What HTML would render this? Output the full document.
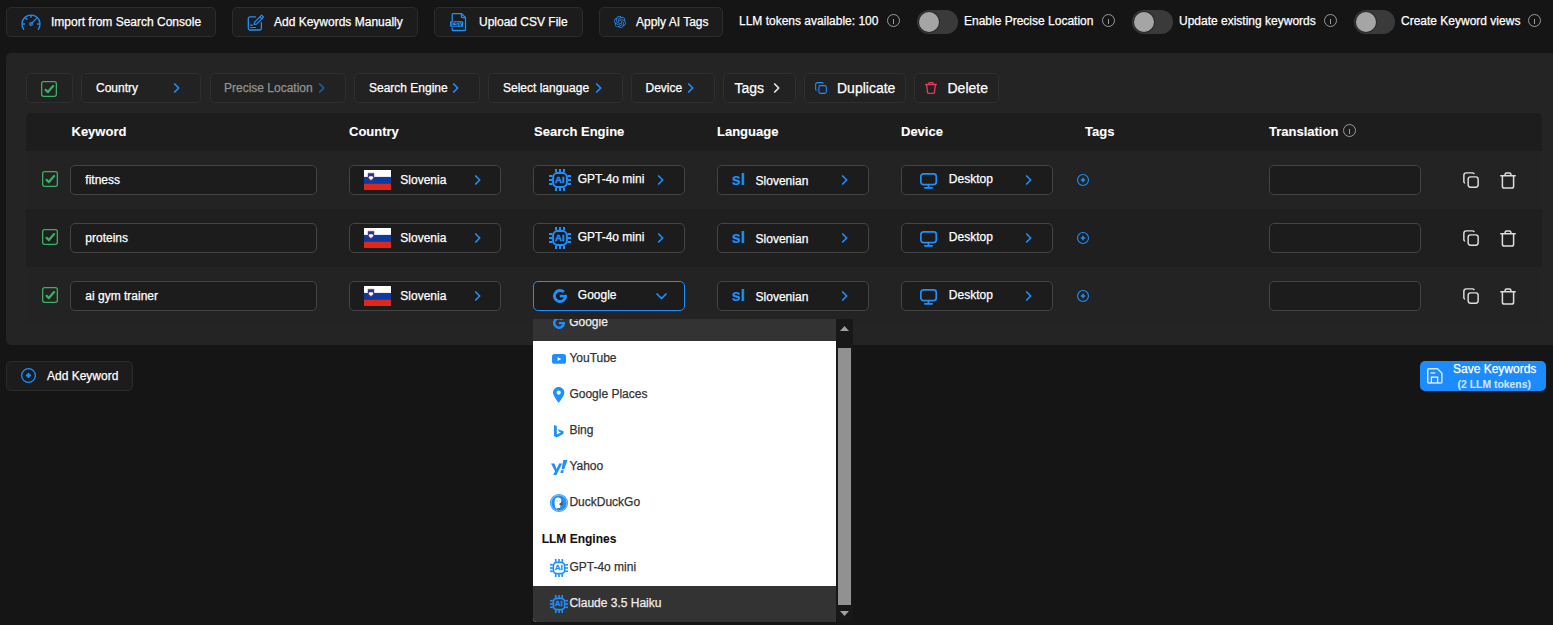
<!DOCTYPE html>
<html><head><meta charset="utf-8">
<style>
*{box-sizing:border-box;margin:0;padding:0}
html,body{width:1553px;height:625px;overflow:hidden;background:#151515;font-family:"Liberation Sans",sans-serif;color:#fff}
.a{position:absolute}
.t{position:absolute;line-height:1;white-space:nowrap}
.f12{font-size:12px}.f13{font-size:13px}.f14{font-size:14px}.f11{font-size:11px}
.b{font-weight:700}
.tb{position:absolute;top:7px;height:30px;border:1px solid #2c2c2c;border-radius:5px;background:#1c1c1c}
.info{position:absolute;width:13px;height:13px;border:1px solid #9a9a9a;border-radius:50%}
.info:after{content:"";position:absolute;left:5px;top:4px;width:1px;height:5px;background:#9a9a9a}
.tog{position:absolute;top:10px;width:41px;height:24px;border-radius:12px;background:#3a3a3a}
.tog:before{content:"";position:absolute;left:1px;top:1px;width:22px;height:22px;border-radius:50%;background:#2a2a2a}
.tog:after{content:"";position:absolute;left:2px;top:2px;width:20px;height:20px;border-radius:50%;background:#a5a5a5}
.panel{position:absolute;left:6px;top:53px;width:1560px;height:292px;background:#242424;border-radius:5px}
.pb{position:absolute;top:73px;height:30px;border:1px solid #2f2f2f;border-radius:5px;background:#222}
.chk{position:absolute;width:16px;height:16px;border:1.5px solid #3ea85a;border-radius:2px}
.inp{position:absolute;height:30px;border:1px solid #444;border-radius:5px;background:#1c1c1c}
.row{position:absolute;left:26px;width:1516px;height:58px}
svg{position:absolute;overflow:visible}
.dd{color:#333}
.t{-webkit-text-stroke:0.25px currentColor}
.t.b{-webkit-text-stroke:0.1px currentColor}

</style></head><body>
<!-- TOP BAR -->
<div class="tb" style="left:6px;width:210px"></div>
<div class="tb" style="left:232px;width:186px"></div>
<div class="tb" style="left:434px;width:149px"></div>
<div class="tb" style="left:599px;width:124px"></div>
<span class="t f12" style="left:51px;top:15.5px">Import from Search Console</span>
<span class="t f12" style="left:274px;top:15.5px">Add Keywords Manually</span>
<span class="t f12" style="left:479px;top:15.5px">Upload CSV File</span>
<span class="t f12" style="left:636px;top:15.5px">Apply AI Tags</span>

<span class="t f12" style="left:739px;top:14.6px">LLM tokens available: 100</span>
<div class="info" style="left:887px;top:14px"></div>
<div class="tog" style="left:917px"></div>
<span class="t f12" style="left:964px;top:14.6px">Enable Precise Location</span>
<div class="info" style="left:1102px;top:14px"></div>
<div class="tog" style="left:1132px"></div>
<span class="t f12" style="left:1179px;top:14.6px">Update existing keywords</span>
<div class="info" style="left:1324px;top:14px"></div>
<div class="tog" style="left:1354px"></div>
<span class="t f12" style="left:1401px;top:14.6px">Create Keyword views</span>
<div class="info" style="left:1528px;top:14px"></div>

<!-- PANEL -->
<div class="panel"></div>
<div class="pb" style="left:26px;width:47px"></div>
<svg style="left:41px;top:81px" width="16" height="16" viewBox="0 0 16 16"><rect x="0.65" y="0.65" width="14.7" height="14.7" rx="2" fill="none" stroke="#3bae63" stroke-width="1.3"/><path d="M4.6 8.9 L6.9 11.1 L12.1 5.1" fill="none" stroke="#3bae63" stroke-width="2.3" stroke-linecap="round" stroke-linejoin="round"/></svg>
<div class="pb" style="left:81px;width:120px"></div>
<span class="t f12" style="left:96px;top:81.5px">Country</span>
<div class="pb" style="left:210px;width:136px"></div>
<span class="t f12" style="left:224px;top:81.5px;color:#939393">Precise Location</span>
<div class="pb" style="left:354px;width:126px"></div>
<span class="t f12" style="left:369px;top:81.5px">Search Engine</span>
<div class="pb" style="left:488px;width:135px"></div>
<span class="t f12" style="left:503px;top:81.5px">Select language</span>
<div class="pb" style="left:631px;width:84px"></div>
<span class="t f12" style="left:645.5px;top:81.5px">Device</span>
<div class="pb" style="left:723px;width:73px"></div>
<span class="t f14" style="left:734.5px;top:80.8px">Tags</span>
<div class="pb" style="left:804px;width:102px"></div>
<span class="t f14" style="left:837px;top:80.8px">Duplicate</span>
<div class="pb" style="left:914px;width:85px"></div>
<span class="t f14" style="left:947.5px;top:80.8px">Delete</span>

<!-- TABLE HEADER -->
<div class="a" style="left:26px;top:113px;width:1516px;height:38px;background:#1d1d1d;border-radius:5px 5px 0 0"></div>
<span class="t f13 b" style="left:71.5px;top:124.9px">Keyword</span>
<span class="t f13 b" style="left:349px;top:124.9px">Country</span>
<span class="t f13 b" style="left:534px;top:124.9px">Search Engine</span>
<span class="t f13 b" style="left:717px;top:124.9px">Language</span>
<span class="t f13 b" style="left:901px;top:124.9px">Device</span>
<span class="t f13 b" style="left:1085px;top:124.9px">Tags</span>
<span class="t f13 b" style="left:1269px;top:124.9px">Translation</span>
<div class="info" style="left:1343px;top:124px"></div>

<!-- ROWS -->
<div class="row" style="top:151px;background:#232323"></div>
<div class="row" style="top:209px;background:#1f1f1f"></div>
<div class="row" style="top:267px;background:#232323"></div>

<svg style="left:42px;top:171px" width="16" height="16" viewBox="0 0 16 16"><rect x="0.65" y="0.65" width="14.7" height="14.7" rx="2" fill="none" stroke="#3bae63" stroke-width="1.3"/><path d="M4.6 8.9 L6.9 11.1 L12.1 5.1" fill="none" stroke="#3bae63" stroke-width="2.3" stroke-linecap="round" stroke-linejoin="round"/></svg><div class="inp" style="left:70px;top:165px;width:247px"></div><span class="t f12" style="left:85.3px;top:173.9px">fitness</span><div class="inp" style="left:349px;top:165px;width:152px"></div><svg style="left:364px;top:170px" width="27" height="20" viewBox="0 0 27 20"><rect width="27" height="7" fill="#fff"/><rect y="6.9" width="27" height="6.7" fill="#0b3ba1"/><rect y="13.6" width="27" height="6.4" fill="#e0281a"/><path d="M4 3.2 h6 v3.8 c0 2 -1.5 3.2 -3 3.8 c-1.5 -0.6 -3 -1.8 -3 -3.8z" fill="#0b3ba1" stroke="#e0281a" stroke-width="0.5"/><path d="M4.6 7.6 l1.4 -1.8 l1 1 l1 -1 l1.4 1.8 c-0.5 1.2 -1.5 2 -2.4 2.4 c-0.9 -0.4 -1.9 -1.2 -2.4 -2.4z" fill="#fff"/></svg><span class="t f12" style="left:400.3px;top:173.9px">Slovenia</span><svg style="left:474.5px;top:175.2px" width="6" height="10" viewBox="0 0 6 10"><path d="M0.7 1 L4.7 5 L0.7 9" fill="none" stroke="#1e8fff" stroke-width="1.7" stroke-linecap="round" stroke-linejoin="round"/></svg><div class="inp" style="left:533px;top:165px;width:152px"></div><svg style="left:549px;top:169px" width="22" height="22" viewBox="0 0 22 22"><rect x="6" y="0" width="2" height="3.5" fill="#1e8fff"/><rect x="6" y="18.5" width="2" height="3.5" fill="#1e8fff"/><rect x="0" y="6" width="3.5" height="2" fill="#1e8fff"/><rect x="18.5" y="6" width="3.5" height="2" fill="#1e8fff"/><rect x="10" y="0" width="2" height="3.5" fill="#1e8fff"/><rect x="10" y="18.5" width="2" height="3.5" fill="#1e8fff"/><rect x="0" y="10" width="3.5" height="2" fill="#1e8fff"/><rect x="18.5" y="10" width="3.5" height="2" fill="#1e8fff"/><rect x="14" y="0" width="2" height="3.5" fill="#1e8fff"/><rect x="14" y="18.5" width="2" height="3.5" fill="#1e8fff"/><rect x="0" y="14" width="3.5" height="2" fill="#1e8fff"/><rect x="18.5" y="14" width="3.5" height="2" fill="#1e8fff"/><rect x="4.1" y="4.1" width="13.8" height="13.8" rx="4.4" fill="#1c1c1c" stroke="#1e8fff" stroke-width="2"/><text x="5.9" y="13.8" textLength="9.8" lengthAdjust="spacingAndGlyphs" font-family="Liberation Sans" font-weight="700" font-size="9" fill="#1e8fff" stroke="#1e8fff" stroke-width="0.35">AI</text></svg><span class="t f12" style="left:577.7px;top:172.7px">GPT-4o mini</span><svg style="left:658.2px;top:175px" width="6" height="10" viewBox="0 0 6 10"><path d="M0.7 1 L4.7 5 L0.7 9" fill="none" stroke="#1e8fff" stroke-width="1.7" stroke-linecap="round" stroke-linejoin="round"/></svg><div class="inp" style="left:717px;top:165px;width:152px"></div><span class="t b" style="font-size:16px;left:731.8px;top:172.4px;color:#1e8fff">sl</span><span class="t f12" style="left:755.6px;top:174.8px">Slovenian</span><svg style="left:842.3px;top:175.2px" width="6" height="10" viewBox="0 0 6 10"><path d="M0.7 1 L4.7 5 L0.7 9" fill="none" stroke="#1e8fff" stroke-width="1.7" stroke-linecap="round" stroke-linejoin="round"/></svg><div class="inp" style="left:901px;top:165px;width:152px"></div><svg style="left:919.8px;top:172.5px" width="18" height="16" viewBox="0 0 18 16"><rect x="0.85" y="0.85" width="15.4" height="10.7" rx="2.6" fill="none" stroke="#1e8fff" stroke-width="1.7"/><path d="M8.5 11.6 V14.6 M4.8 14.8 H12.2" fill="none" stroke="#1e8fff" stroke-width="1.7" stroke-linecap="round"/></svg><span class="t f12" style="left:948.8px;top:173px">Desktop</span><svg style="left:1026.3px;top:175.2px" width="6" height="10" viewBox="0 0 6 10"><path d="M0.7 1 L4.7 5 L0.7 9" fill="none" stroke="#1e8fff" stroke-width="1.7" stroke-linecap="round" stroke-linejoin="round"/></svg><svg style="left:1077px;top:174px" width="12" height="12" viewBox="0 0 12 12"><circle cx="6.0" cy="6.0" r="5.45" fill="none" stroke="#1e8fff" stroke-width="1.1"/><path d="M3.8 6.0 H8.2 M6.0 3.8 V8.2" stroke="#1e8fff" stroke-width="1.5"/></svg><div class="inp" style="left:1269px;top:165px;width:152px"></div><svg style="left:1463px;top:172px" width="16" height="16" viewBox="0 0 16 16"><path d="M11 1.6 C10.7 1.1 10.2 0.85 9.6 0.85 H3.4 C2 0.85 0.85 2 0.85 3.4 V9.6 C0.85 10.2 1.1 10.7 1.6 11" fill="none" stroke="#dedede" stroke-width="1.45" stroke-linecap="round"/><rect x="5.15" y="4.85" width="10" height="10.3" rx="2.4" fill="none" stroke="#dedede" stroke-width="1.45"/></svg><svg style="left:1500px;top:171.5px" width="16" height="17" viewBox="0 0 16 17"><path d="M0.8 3.8 H15.2" stroke="#dedede" stroke-width="1.5" stroke-linecap="round"/><path d="M4.8 3.6 L5.4 1.6 C5.6 1.1 5.9 0.9 6.4 0.9 H9.6 C10.1 0.9 10.4 1.1 10.6 1.6 L11.2 3.6" fill="none" stroke="#dedede" stroke-width="1.5"/><path d="M2.4 4 V14.2 C2.4 15.3 3.1 16.1 4.2 16.1 H11.8 C12.9 16.1 13.6 15.3 13.6 14.2 V4" fill="none" stroke="#dedede" stroke-width="1.5"/></svg><svg style="left:42px;top:229px" width="16" height="16" viewBox="0 0 16 16"><rect x="0.65" y="0.65" width="14.7" height="14.7" rx="2" fill="none" stroke="#3bae63" stroke-width="1.3"/><path d="M4.6 8.9 L6.9 11.1 L12.1 5.1" fill="none" stroke="#3bae63" stroke-width="2.3" stroke-linecap="round" stroke-linejoin="round"/></svg><div class="inp" style="left:70px;top:223px;width:247px"></div><span class="t f12" style="left:85.3px;top:231.9px">proteins</span><div class="inp" style="left:349px;top:223px;width:152px"></div><svg style="left:364px;top:228px" width="27" height="20" viewBox="0 0 27 20"><rect width="27" height="7" fill="#fff"/><rect y="6.9" width="27" height="6.7" fill="#0b3ba1"/><rect y="13.6" width="27" height="6.4" fill="#e0281a"/><path d="M4 3.2 h6 v3.8 c0 2 -1.5 3.2 -3 3.8 c-1.5 -0.6 -3 -1.8 -3 -3.8z" fill="#0b3ba1" stroke="#e0281a" stroke-width="0.5"/><path d="M4.6 7.6 l1.4 -1.8 l1 1 l1 -1 l1.4 1.8 c-0.5 1.2 -1.5 2 -2.4 2.4 c-0.9 -0.4 -1.9 -1.2 -2.4 -2.4z" fill="#fff"/></svg><span class="t f12" style="left:400.3px;top:231.9px">Slovenia</span><svg style="left:474.5px;top:233.2px" width="6" height="10" viewBox="0 0 6 10"><path d="M0.7 1 L4.7 5 L0.7 9" fill="none" stroke="#1e8fff" stroke-width="1.7" stroke-linecap="round" stroke-linejoin="round"/></svg><div class="inp" style="left:533px;top:223px;width:152px"></div><svg style="left:549px;top:227px" width="22" height="22" viewBox="0 0 22 22"><rect x="6" y="0" width="2" height="3.5" fill="#1e8fff"/><rect x="6" y="18.5" width="2" height="3.5" fill="#1e8fff"/><rect x="0" y="6" width="3.5" height="2" fill="#1e8fff"/><rect x="18.5" y="6" width="3.5" height="2" fill="#1e8fff"/><rect x="10" y="0" width="2" height="3.5" fill="#1e8fff"/><rect x="10" y="18.5" width="2" height="3.5" fill="#1e8fff"/><rect x="0" y="10" width="3.5" height="2" fill="#1e8fff"/><rect x="18.5" y="10" width="3.5" height="2" fill="#1e8fff"/><rect x="14" y="0" width="2" height="3.5" fill="#1e8fff"/><rect x="14" y="18.5" width="2" height="3.5" fill="#1e8fff"/><rect x="0" y="14" width="3.5" height="2" fill="#1e8fff"/><rect x="18.5" y="14" width="3.5" height="2" fill="#1e8fff"/><rect x="4.1" y="4.1" width="13.8" height="13.8" rx="4.4" fill="#1c1c1c" stroke="#1e8fff" stroke-width="2"/><text x="5.9" y="13.8" textLength="9.8" lengthAdjust="spacingAndGlyphs" font-family="Liberation Sans" font-weight="700" font-size="9" fill="#1e8fff" stroke="#1e8fff" stroke-width="0.35">AI</text></svg><span class="t f12" style="left:577.7px;top:230.7px">GPT-4o mini</span><svg style="left:658.2px;top:233px" width="6" height="10" viewBox="0 0 6 10"><path d="M0.7 1 L4.7 5 L0.7 9" fill="none" stroke="#1e8fff" stroke-width="1.7" stroke-linecap="round" stroke-linejoin="round"/></svg><div class="inp" style="left:717px;top:223px;width:152px"></div><span class="t b" style="font-size:16px;left:731.8px;top:230.4px;color:#1e8fff">sl</span><span class="t f12" style="left:755.6px;top:232.8px">Slovenian</span><svg style="left:842.3px;top:233.2px" width="6" height="10" viewBox="0 0 6 10"><path d="M0.7 1 L4.7 5 L0.7 9" fill="none" stroke="#1e8fff" stroke-width="1.7" stroke-linecap="round" stroke-linejoin="round"/></svg><div class="inp" style="left:901px;top:223px;width:152px"></div><svg style="left:919.8px;top:230.5px" width="18" height="16" viewBox="0 0 18 16"><rect x="0.85" y="0.85" width="15.4" height="10.7" rx="2.6" fill="none" stroke="#1e8fff" stroke-width="1.7"/><path d="M8.5 11.6 V14.6 M4.8 14.8 H12.2" fill="none" stroke="#1e8fff" stroke-width="1.7" stroke-linecap="round"/></svg><span class="t f12" style="left:948.8px;top:231px">Desktop</span><svg style="left:1026.3px;top:233.2px" width="6" height="10" viewBox="0 0 6 10"><path d="M0.7 1 L4.7 5 L0.7 9" fill="none" stroke="#1e8fff" stroke-width="1.7" stroke-linecap="round" stroke-linejoin="round"/></svg><svg style="left:1077px;top:232px" width="12" height="12" viewBox="0 0 12 12"><circle cx="6.0" cy="6.0" r="5.45" fill="none" stroke="#1e8fff" stroke-width="1.1"/><path d="M3.8 6.0 H8.2 M6.0 3.8 V8.2" stroke="#1e8fff" stroke-width="1.5"/></svg><div class="inp" style="left:1269px;top:223px;width:152px"></div><svg style="left:1463px;top:230px" width="16" height="16" viewBox="0 0 16 16"><path d="M11 1.6 C10.7 1.1 10.2 0.85 9.6 0.85 H3.4 C2 0.85 0.85 2 0.85 3.4 V9.6 C0.85 10.2 1.1 10.7 1.6 11" fill="none" stroke="#dedede" stroke-width="1.45" stroke-linecap="round"/><rect x="5.15" y="4.85" width="10" height="10.3" rx="2.4" fill="none" stroke="#dedede" stroke-width="1.45"/></svg><svg style="left:1500px;top:229.5px" width="16" height="17" viewBox="0 0 16 17"><path d="M0.8 3.8 H15.2" stroke="#dedede" stroke-width="1.5" stroke-linecap="round"/><path d="M4.8 3.6 L5.4 1.6 C5.6 1.1 5.9 0.9 6.4 0.9 H9.6 C10.1 0.9 10.4 1.1 10.6 1.6 L11.2 3.6" fill="none" stroke="#dedede" stroke-width="1.5"/><path d="M2.4 4 V14.2 C2.4 15.3 3.1 16.1 4.2 16.1 H11.8 C12.9 16.1 13.6 15.3 13.6 14.2 V4" fill="none" stroke="#dedede" stroke-width="1.5"/></svg><svg style="left:42px;top:287px" width="16" height="16" viewBox="0 0 16 16"><rect x="0.65" y="0.65" width="14.7" height="14.7" rx="2" fill="none" stroke="#3bae63" stroke-width="1.3"/><path d="M4.6 8.9 L6.9 11.1 L12.1 5.1" fill="none" stroke="#3bae63" stroke-width="2.3" stroke-linecap="round" stroke-linejoin="round"/></svg><div class="inp" style="left:70px;top:281px;width:247px"></div><span class="t f12" style="left:85.3px;top:289.9px">ai gym trainer</span><div class="inp" style="left:349px;top:281px;width:152px"></div><svg style="left:364px;top:286px" width="27" height="20" viewBox="0 0 27 20"><rect width="27" height="7" fill="#fff"/><rect y="6.9" width="27" height="6.7" fill="#0b3ba1"/><rect y="13.6" width="27" height="6.4" fill="#e0281a"/><path d="M4 3.2 h6 v3.8 c0 2 -1.5 3.2 -3 3.8 c-1.5 -0.6 -3 -1.8 -3 -3.8z" fill="#0b3ba1" stroke="#e0281a" stroke-width="0.5"/><path d="M4.6 7.6 l1.4 -1.8 l1 1 l1 -1 l1.4 1.8 c-0.5 1.2 -1.5 2 -2.4 2.4 c-0.9 -0.4 -1.9 -1.2 -2.4 -2.4z" fill="#fff"/></svg><span class="t f12" style="left:400.3px;top:289.9px">Slovenia</span><svg style="left:474.5px;top:291.2px" width="6" height="10" viewBox="0 0 6 10"><path d="M0.7 1 L4.7 5 L0.7 9" fill="none" stroke="#1e8fff" stroke-width="1.7" stroke-linecap="round" stroke-linejoin="round"/></svg><div class="inp" style="left:533px;top:281px;width:152px;border-color:#1e8fff"></div><svg style="left:553px;top:289px" width="14" height="14" viewBox="0 0 14 14"><path d="M12.55 7 A5.55 5.55 0 1 1 10.9 3.05" fill="none" stroke="#1e8fff" stroke-width="2.9"/><path d="M6.8 7.1 H14" stroke="#1e8fff" stroke-width="2.6"/></svg><span class="t f12" style="left:577.8px;top:288.8px">Google</span><svg style="left:655.5px;top:292.5px" width="11" height="7" viewBox="0 0 11 7"><path d="M1 1 L5.5 5.5 L10 1" fill="none" stroke="#1e8fff" stroke-width="1.7" stroke-linecap="round" stroke-linejoin="round"/></svg><div class="inp" style="left:717px;top:281px;width:152px"></div><span class="t b" style="font-size:16px;left:731.8px;top:288.4px;color:#1e8fff">sl</span><span class="t f12" style="left:755.6px;top:290.8px">Slovenian</span><svg style="left:842.3px;top:291.2px" width="6" height="10" viewBox="0 0 6 10"><path d="M0.7 1 L4.7 5 L0.7 9" fill="none" stroke="#1e8fff" stroke-width="1.7" stroke-linecap="round" stroke-linejoin="round"/></svg><div class="inp" style="left:901px;top:281px;width:152px"></div><svg style="left:919.8px;top:288.5px" width="18" height="16" viewBox="0 0 18 16"><rect x="0.85" y="0.85" width="15.4" height="10.7" rx="2.6" fill="none" stroke="#1e8fff" stroke-width="1.7"/><path d="M8.5 11.6 V14.6 M4.8 14.8 H12.2" fill="none" stroke="#1e8fff" stroke-width="1.7" stroke-linecap="round"/></svg><span class="t f12" style="left:948.8px;top:289px">Desktop</span><svg style="left:1026.3px;top:291.2px" width="6" height="10" viewBox="0 0 6 10"><path d="M0.7 1 L4.7 5 L0.7 9" fill="none" stroke="#1e8fff" stroke-width="1.7" stroke-linecap="round" stroke-linejoin="round"/></svg><svg style="left:1077px;top:290px" width="12" height="12" viewBox="0 0 12 12"><circle cx="6.0" cy="6.0" r="5.45" fill="none" stroke="#1e8fff" stroke-width="1.1"/><path d="M3.8 6.0 H8.2 M6.0 3.8 V8.2" stroke="#1e8fff" stroke-width="1.5"/></svg><div class="inp" style="left:1269px;top:281px;width:152px"></div><svg style="left:1463px;top:288px" width="16" height="16" viewBox="0 0 16 16"><path d="M11 1.6 C10.7 1.1 10.2 0.85 9.6 0.85 H3.4 C2 0.85 0.85 2 0.85 3.4 V9.6 C0.85 10.2 1.1 10.7 1.6 11" fill="none" stroke="#dedede" stroke-width="1.45" stroke-linecap="round"/><rect x="5.15" y="4.85" width="10" height="10.3" rx="2.4" fill="none" stroke="#dedede" stroke-width="1.45"/></svg><svg style="left:1500px;top:287.5px" width="16" height="17" viewBox="0 0 16 17"><path d="M0.8 3.8 H15.2" stroke="#dedede" stroke-width="1.5" stroke-linecap="round"/><path d="M4.8 3.6 L5.4 1.6 C5.6 1.1 5.9 0.9 6.4 0.9 H9.6 C10.1 0.9 10.4 1.1 10.6 1.6 L11.2 3.6" fill="none" stroke="#dedede" stroke-width="1.5"/><path d="M2.4 4 V14.2 C2.4 15.3 3.1 16.1 4.2 16.1 H11.8 C12.9 16.1 13.6 15.3 13.6 14.2 V4" fill="none" stroke="#dedede" stroke-width="1.5"/></svg>

<!-- BOTTOM -->
<div class="tb" style="left:6px;top:361px;width:127px"></div>
<span class="t f12" style="left:47px;top:369.6px">Add Keyword</span>
<div class="a" style="left:1420px;top:361px;width:126px;height:30px;background:#1c8bfe;border-radius:5px"></div>
<span class="t f12" style="left:1453px;top:363.2px">Save Keywords</span>
<span class="t b" style="font-size:10.4px;left:1457.6px;top:379.8px;color:#cfe4ff">(2 LLM tokens)</span>

<!-- DROPDOWN -->
<div class="a" style="left:533px;top:319px;width:320px;height:303px;background:#181818;border-radius:0 0 4px 4px;overflow:hidden">
  <div class="a" style="left:0;top:0;width:303px;height:303px;background:#fff"></div>
  <div class="a" style="left:0;top:0;width:303px;height:22px;background:#333"></div>
  <div class="a" style="left:0;top:267px;width:303px;height:36px;background:#333"></div>
  <div class="a" style="left:305px;top:29px;width:13px;height:257px;background:#919191"></div>
  <svg style="left:307px;top:6.5px" width="9" height="5" viewBox="0 0 9 5"><path d="M0 5 L4.5 0 L9 5Z" fill="#a0a0a0"/></svg>
  <svg style="left:307px;top:292px" width="9" height="5" viewBox="0 0 9 5"><path d="M0 0 L4.5 5 L9 0Z" fill="#a0a0a0"/></svg>
</div>
<div class="a" style="left:533px;top:319px;width:303px;height:303px;overflow:hidden">
<svg style="left:20px;top:-1.8px" width="12" height="12" viewBox="0 0 14 14"><path d="M12.55 7 A5.55 5.55 0 1 1 10.9 3.05" fill="none" stroke="#1e8fff" stroke-width="2.9"/><path d="M6.8 7.1 H14" stroke="#1e8fff" stroke-width="2.6"/></svg>
</div>
<div class="a" style="left:533px;top:319px;width:303px;height:22px;overflow:hidden">
<span class="t f12" style="left:36.2px;top:-3.5px;color:#eee">Google</span>
</div>
<span class="t f12 dd" style="left:569.4px;top:351.6px">YouTube</span>
<span class="t f12 dd" style="left:569.4px;top:387.8px">Google Places</span>
<span class="t f12 dd" style="left:569.4px;top:423.9px">Bing</span>
<span class="t f12 dd" style="left:569.4px;top:459.7px">Yahoo</span>
<span class="t f12 dd" style="left:569.4px;top:495.6px">DuckDuckGo</span>
<span class="t f12 b" style="left:541.7px;top:532.8px;color:#111">LLM Engines</span>
<span class="t f12 dd" style="left:569.4px;top:560.6px">GPT-4o mini</span>
<span class="t f12" style="left:569.4px;top:596.8px;color:#eee">Claude 3.5 Haiku</span>
<svg style="left:550px;top:559px" width="18" height="18" viewBox="0 0 22 22"><rect x="6" y="0" width="2" height="3.5" fill="#1e8fff"/><rect x="6" y="18.5" width="2" height="3.5" fill="#1e8fff"/><rect x="0" y="6" width="3.5" height="2" fill="#1e8fff"/><rect x="18.5" y="6" width="3.5" height="2" fill="#1e8fff"/><rect x="10" y="0" width="2" height="3.5" fill="#1e8fff"/><rect x="10" y="18.5" width="2" height="3.5" fill="#1e8fff"/><rect x="0" y="10" width="3.5" height="2" fill="#1e8fff"/><rect x="18.5" y="10" width="3.5" height="2" fill="#1e8fff"/><rect x="14" y="0" width="2" height="3.5" fill="#1e8fff"/><rect x="14" y="18.5" width="2" height="3.5" fill="#1e8fff"/><rect x="0" y="14" width="3.5" height="2" fill="#1e8fff"/><rect x="18.5" y="14" width="3.5" height="2" fill="#1e8fff"/><rect x="4.1" y="4.1" width="13.8" height="13.8" rx="4.4" fill="#fff" stroke="#1e8fff" stroke-width="2"/><text x="5.9" y="13.8" textLength="9.8" lengthAdjust="spacingAndGlyphs" font-family="Liberation Sans" font-weight="700" font-size="9" fill="#1e8fff" stroke="#1e8fff" stroke-width="0.35">AI</text></svg>
<svg style="left:550px;top:595px" width="18" height="18" viewBox="0 0 22 22"><rect x="6" y="0" width="2" height="3.5" fill="#1e8fff"/><rect x="6" y="18.5" width="2" height="3.5" fill="#1e8fff"/><rect x="0" y="6" width="3.5" height="2" fill="#1e8fff"/><rect x="18.5" y="6" width="3.5" height="2" fill="#1e8fff"/><rect x="10" y="0" width="2" height="3.5" fill="#1e8fff"/><rect x="10" y="18.5" width="2" height="3.5" fill="#1e8fff"/><rect x="0" y="10" width="3.5" height="2" fill="#1e8fff"/><rect x="18.5" y="10" width="3.5" height="2" fill="#1e8fff"/><rect x="14" y="0" width="2" height="3.5" fill="#1e8fff"/><rect x="14" y="18.5" width="2" height="3.5" fill="#1e8fff"/><rect x="0" y="14" width="3.5" height="2" fill="#1e8fff"/><rect x="18.5" y="14" width="3.5" height="2" fill="#1e8fff"/><rect x="4.1" y="4.1" width="13.8" height="13.8" rx="4.4" fill="#333" stroke="#1e8fff" stroke-width="2"/><text x="5.9" y="13.8" textLength="9.8" lengthAdjust="spacingAndGlyphs" font-family="Liberation Sans" font-weight="700" font-size="9" fill="#1e8fff" stroke="#1e8fff" stroke-width="0.35">AI</text></svg>
<svg style="left:552px;top:354.2px" width="14" height="10" viewBox="0 0 14 10"><rect x="0" y="0" width="14" height="9.8" rx="2.6" fill="#1e8fff"/><path d="M5.6 2.9 L9.2 4.9 L5.6 6.9Z" fill="#fff"/></svg>
<svg style="left:552.8px;top:387px" width="11.4" height="16" viewBox="0 0 11.4 16"><path d="M5.7 0 C2.55 0 0 2.5 0 5.6 C0 9.2 5.7 16 5.7 16 C5.7 16 11.4 9.2 11.4 5.6 C11.4 2.5 8.85 0 5.7 0Z M5.7 3.5 A2.1 2.1 0 1 1 5.7 7.7 A2.1 2.1 0 1 1 5.7 3.5Z" fill="#1e8fff" fill-rule="evenodd"/></svg>
<svg style="left:553.8px;top:425px" width="10" height="13" viewBox="0 0 10 13"><path d="M0 0 L2.8 0.9 V9.6 L6.8 7.4 L4.9 6.5 L3.9 4.2 L9.5 6.2 V8.8 L2.8 12.6 L0 11Z" fill="#1e8fff"/></svg>
<svg style="left:551px;top:460px" width="16.5" height="15" viewBox="0 0 16.5 15"><path d="M0 3.4 H3.3 L5.7 9 L8.1 3.4 H11.2 L5.4 15 H2.2 L4.1 11.2 Z" fill="#1e8fff"/><path d="M12.3 0 H16.5 L13.2 9.2 H10.6Z M10 10.3 H12.8 L12.2 12.9 H9.4Z" fill="#1e8fff"/></svg>
<svg style="left:550.2px;top:494px" width="18" height="18" viewBox="0 0 18 18"><circle cx="9" cy="9" r="9" fill="#1e8fff"/><circle cx="9" cy="9" r="7.9" fill="none" stroke="#fff" stroke-width="0.6" stroke-opacity="0.75"/><path d="M5.4 4.4 C6.6 3.2 9.6 3.2 10.7 4.7 C11.4 5.7 11.3 7.4 10.9 8.6 L10.3 9.8 C10.1 11.2 10.5 12.8 10.1 14.6 C8.7 15 6.9 14.9 5.8 14.3 C4.5 11.6 4 6.8 5.4 4.4Z" fill="#fff"/><path d="M9.2 9.7 L12.8 8.1 L13.1 8.9 L10.6 10.1 L13 10.3 L12.8 10.9 L9.4 10.8Z" fill="#4a4a4a"/><path d="M7.4 14.3 H10.4 L10.1 15.3 H7.6Z" fill="#4a4a4a"/><circle cx="7.2" cy="7" r="0.55" fill="#5a8fd8"/><circle cx="9.8" cy="7" r="0.45" fill="#5a8fd8"/></svg>
<svg style="left:21px;top:14px" width="20" height="16" viewBox="0 0 20 16"><path d="M2.7 15.3 A9 9 0 1 1 17.3 15.3" fill="none" stroke="#1e8fff" stroke-width="1.3" stroke-linecap="round"/><path d="M10 1.6 V3.2 M4.9 4.3 L5.9 5.3 M1.9 10 H3.4 M16.6 10 H18.1" stroke="#1e8fff" stroke-width="1.4" stroke-linecap="round"/><circle cx="10" cy="10" r="1.3" fill="none" stroke="#1e8fff" stroke-width="1.2"/><path d="M11 9 L15.6 4.4" stroke="#1e8fff" stroke-width="1.1" stroke-linecap="round"/></svg>
<svg style="left:247px;top:14px" width="18" height="17" viewBox="0 0 18 17"><path d="M8.4 2.9 H3 C2 2.9 1.3 3.6 1.3 4.6 V14.3 C1.3 15.3 2 16 3 16 H12.7 C13.7 16 14.4 15.3 14.4 14.3 V8.6" fill="none" stroke="#1e8fff" stroke-width="1.3" stroke-linecap="round"/><path d="M7.2 10.4 L7.6 8.2 L14.6 1.2 L16.6 3.2 L9.6 10.2Z M13 2.8 L15 4.8" fill="none" stroke="#1e8fff" stroke-width="1.2" stroke-linejoin="round"/><path d="M3.6 11.2 H5.4 M3.6 13.5 H8.4" stroke="#1e8fff" stroke-width="1.2" stroke-linecap="round"/></svg>
<svg style="left:450px;top:13px" width="17" height="18" viewBox="0 0 17 18"><path d="M2.2 8 V1.6 C2.2 1.1 2.6 0.7 3.1 0.7 H11.6 L15.5 4.6 V16.8 C15.5 17.2 15.2 17.5 14.8 17.5 H3 C2.6 17.5 2.2 17.2 2.2 16.8 V14.4" fill="none" stroke="#1e8fff" stroke-width="1.3"/><path d="M11.4 0.8 V3.6 C11.4 4.3 11.8 4.7 12.5 4.7 H15.4" fill="none" stroke="#1e8fff" stroke-width="1.2"/><rect x="0" y="8.2" width="13.2" height="5.6" rx="1" fill="#1e8fff"/><text x="6.6" y="12.8" text-anchor="middle" font-family="Liberation Sans" font-size="5" font-weight="700" fill="#1c1c1c">CSV</text></svg>
<svg style="left:614px;top:16px" width="12" height="12" viewBox="0 0 24 24"><path d="M22.2819 9.8211a5.9847 5.9847 0 0 0-.5157-4.9108 6.0462 6.0462 0 0 0-6.5098-2.9A6.0651 6.0651 0 0 0 4.9807 4.1818a5.9847 5.9847 0 0 0-3.9977 2.9 6.0462 6.0462 0 0 0 .7427 7.0966 5.98 5.98 0 0 0 .511 4.9107 6.051 6.051 0 0 0 6.5146 2.9001A5.9847 5.9847 0 0 0 13.2599 24a6.0557 6.0557 0 0 0 5.7718-4.2058 5.9894 5.9894 0 0 0 3.9977-2.9001 6.0557 6.0557 0 0 0-.7475-7.0729zm-9.022 12.6081a4.4755 4.4755 0 0 1-2.8764-1.0408l.1419-.0804 4.7783-2.7582a.7948.7948 0 0 0 .3927-.6813v-6.7369l2.02 1.1686a.071.071 0 0 1 .038.052v5.5826a4.504 4.504 0 0 1-4.4945 4.4944zm-9.6607-4.1254a4.4708 4.4708 0 0 1-.5346-3.0137l.142.0852 4.783 2.7582a.7712.7712 0 0 0 .7806 0l5.8428-3.3685v2.3324a.0804.0804 0 0 1-.0332.0615L9.74 19.9502a4.4992 4.4992 0 0 1-6.1408-1.6464zM2.3408 7.8956a4.485 4.485 0 0 1 2.3655-1.9728V11.6a.7664.7664 0 0 0 .3879.6765l5.8144 3.3543-2.0201 1.1685a.0757.0757 0 0 1-.071 0l-4.8303-2.7865A4.504 4.504 0 0 1 2.3408 7.872zm16.5963 3.8558L13.1038 8.364 15.1192 7.2a.0757.0757 0 0 1 .071 0l4.8303 2.7913a4.4944 4.4944 0 0 1-.6765 8.1042v-5.6772a.79.79 0 0 0-.407-.667zm2.0107-3.0231l-.142-.0852-4.7735-2.7818a.7759.7759 0 0 0-.7854 0L9.409 9.2297V6.8974a.0662.0662 0 0 1 .0284-.0615l4.8303-2.7866a4.4992 4.4992 0 0 1 6.6802 4.66zM8.3065 12.863l-2.02-1.1638a.0804.0804 0 0 1-.038-.0567V6.0742a4.4992 4.4992 0 0 1 7.3757-3.4537l-.142.0805L8.704 5.459a.7948.7948 0 0 0-.3927.6813zm1.0976-2.3654l2.602-1.4998 2.6069 1.4998v2.9994l-2.5974 1.4997-2.6067-1.4997Z" fill="#1e8fff"/></svg>
<svg style="left:174.2px;top:83px" width="6" height="10" viewBox="0 0 6 10"><path d="M0.7 1 L4.7 5 L0.7 9" fill="none" stroke="#1e8fff" stroke-width="1.7" stroke-linecap="round" stroke-linejoin="round"/></svg>
<svg style="left:319px;top:83px" width="6" height="10" viewBox="0 0 6 10"><path d="M0.7 1 L4.7 5 L0.7 9" fill="none" stroke="#23609f" stroke-width="1.7" stroke-linecap="round" stroke-linejoin="round"/></svg>
<svg style="left:453.2px;top:83px" width="6" height="10" viewBox="0 0 6 10"><path d="M0.7 1 L4.7 5 L0.7 9" fill="none" stroke="#1e8fff" stroke-width="1.7" stroke-linecap="round" stroke-linejoin="round"/></svg>
<svg style="left:596.2px;top:83px" width="6" height="10" viewBox="0 0 6 10"><path d="M0.7 1 L4.7 5 L0.7 9" fill="none" stroke="#1e8fff" stroke-width="1.7" stroke-linecap="round" stroke-linejoin="round"/></svg>
<svg style="left:688.2px;top:83px" width="6" height="10" viewBox="0 0 6 10"><path d="M0.7 1 L4.7 5 L0.7 9" fill="none" stroke="#1e8fff" stroke-width="1.7" stroke-linecap="round" stroke-linejoin="round"/></svg>
<svg style="left:774px;top:83px" width="6" height="10" viewBox="0 0 6 10"><path d="M0.7 1 L4.7 5 L0.7 9" fill="none" stroke="#e8e8e8" stroke-width="1.7" stroke-linecap="round" stroke-linejoin="round"/></svg>
<svg style="left:815px;top:82px" width="12" height="12" viewBox="0 0 16 16"><path d="M11 1.6 C10.7 1.1 10.2 0.85 9.6 0.85 H3.4 C2 0.85 0.85 2 0.85 3.4 V9.6 C0.85 10.2 1.1 10.7 1.6 11" fill="none" stroke="#1e8fff" stroke-width="1.4" stroke-linecap="round"/><rect x="5.15" y="4.85" width="10" height="10.3" rx="2.4" fill="none" stroke="#1e8fff" stroke-width="1.4"/></svg>
<svg style="left:925px;top:82px" width="12" height="12" viewBox="0 0 12 12"><path d="M0.6 2.5 H11.4" stroke="#e63a5c" stroke-width="1.3" stroke-linecap="round"/><path d="M3.5 2.4 L3.9 1.1 C4 0.8 4.2 0.65 4.5 0.65 H7.5 C7.8 0.65 8 0.8 8.1 1.1 L8.5 2.4" fill="none" stroke="#e63a5c" stroke-width="1.3"/><path d="M1.6 2.7 L2.6 10.6 C2.7 11.1 3 11.35 3.5 11.35 H8.5 C9 11.35 9.3 11.1 9.4 10.6 L10.4 2.7" fill="none" stroke="#e63a5c" stroke-width="1.3"/></svg>
<svg style="left:21.1px;top:368.1px" width="15" height="15" viewBox="0 0 15 15"><circle cx="7.5" cy="7.5" r="6.85" fill="none" stroke="#1e8fff" stroke-width="1.3"/><path d="M4.9 7.5 H10.1 M7.5 4.9 V10.1" stroke="#1e8fff" stroke-width="1.9"/></svg>
<svg style="left:1427.3px;top:368.3px" width="16" height="16" viewBox="0 0 16 16"><path d="M1.5 0.75 H10.6 L14.9 5.2 V14 C14.9 14.7 14.5 15.1 13.8 15.1 H1.8 C1.1 15.1 0.75 14.7 0.75 14 V1.6 C0.75 1.1 1.1 0.75 1.5 0.75Z" fill="none" stroke="#d2e6ff" stroke-width="1.5" stroke-linejoin="round"/><path d="M4 5 H7.8" stroke="#d2e6ff" stroke-width="1.3" stroke-linecap="round"/><path d="M4.4 15 V9.2 H10.6 V15" fill="none" stroke="#fff" stroke-width="1.3"/></svg>

</body></html>
